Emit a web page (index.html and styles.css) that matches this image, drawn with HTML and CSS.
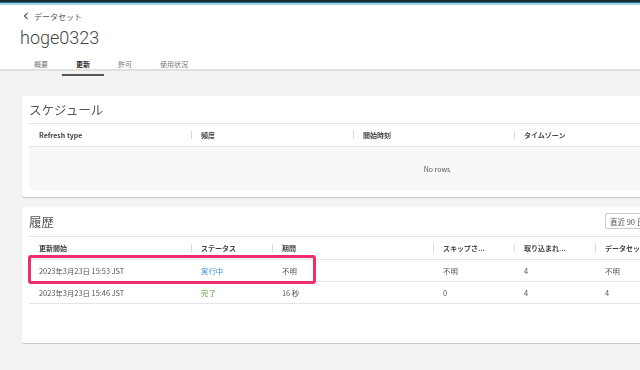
FILE: index.html
```html
<!DOCTYPE html>
<html lang="ja">
<head>
    <meta charset="UTF-8">
    <meta name="viewport" content="width=device-width, initial-scale=1.0">
    <title>hoge0323</title>
    <link rel="stylesheet" href="styles.css">
</head>
<body>
    <div class="topbar"></div>

    <header class="page-header">
        <div class="breadcrumb">
            <svg class="chevron" width="6" height="8" viewBox="0 0 6 8"><path d="M4.5 0.8 L1.5 4 L4.5 7.2" fill="none" stroke="#555" stroke-width="1.2"/></svg>
            <span>データセット</span>
        </div>
        <h1>hoge0323</h1>
        <nav class="tabs">
            <span class="tab">概要</span>
            <span class="tab active">更新</span>
            <span class="tab">許可</span>
            <span class="tab">使用状況</span>
        </nav>
    </header>

    <main class="content">
        <!-- スケジュール -->
        <section class="card">
            <div class="card-title">
                <h2>スケジュール</h2>
            </div>
            <div class="table">
                <div class="thead sched-cols">
                    <div class="th">Refresh type</div>
                    <div class="th sep">頻度</div>
                    <div class="th sep">開始時刻</div>
                    <div class="th sep">タイムゾーン</div>
                    <div class="th"></div>
                </div>
                <div class="empty">No rows</div>
            </div>
        </section>

        <!-- 履歴 -->
        <section class="card history">
            <div class="card-title">
                <h2>履歴</h2>
                <div class="range-select">直近 90 日</div>
            </div>
            <div class="table">
                <div class="thead hist-cols">
                    <div class="th">更新開始</div>
                    <div class="th sep">ステータス</div>
                    <div class="th sep">期間</div>
                    <div class="th sep">スキップさ...</div>
                    <div class="th sep">取り込まれ...</div>
                    <div class="th sep">データセット</div>
                </div>
                <div class="row hist-cols">
                    <div class="td">2023年3月23日 15:53 JST</div>
                    <div class="td running">実行中</div>
                    <div class="td">不明</div>
                    <div class="td">不明</div>
                    <div class="td">4</div>
                    <div class="td">不明</div>
                </div>
                <div class="row hist-cols">
                    <div class="td">2023年3月23日 15:46 JST</div>
                    <div class="td done">完了</div>
                    <div class="td">16 秒</div>
                    <div class="td">0</div>
                    <div class="td">4</div>
                    <div class="td">4</div>
                </div>
                <div class="highlight"></div>
            </div>
        </section>
    </main>
</body>
</html>
```

FILE: styles.css
```css
:root {
    --text: #444;
    --muted: #666;
    --line: #e4e4e4;
    --page: #f3f3f3;
}

body {
    margin: 0;
    width: 640px;
    height: 370px;
    overflow: hidden;
    background-color: var(--page);
    font-family: "Noto Sans CJK JP", "Noto Sans", sans-serif;
    color: var(--text);
}

.topbar {
    height: 2px;
    background-color: #1b2a33;
    border-bottom: 1px solid #1f6b8c;
    box-shadow: 0 2px 0 #a7d3ea;
    margin-bottom: 2px;
}

.page-header {
    background-color: #fff;
    height: 66px;
    border-bottom: 2px solid #e0e0e0;
    box-sizing: border-box;
    padding: 5px 0 0 20px;
}

.breadcrumb {
    display: flex;
    align-items: center;
    gap: 5px;
    font-size: 8px;
    color: #555;
    height: 12px;
    padding-left: 3px;
}

.page-header h1 {
    margin: 4px 0 0;
    font-family: Roboto, "Noto Sans", sans-serif;
    font-weight: 300;
    font-size: 18px;
    line-height: 24px;
    color: #444;
}

.tabs {
    display: flex;
    margin-top: 7px;
}

.tab {
    font-size: 7px;
    color: #777;
    padding: 0 14px;
    height: 19px;
    line-height: 14px;
    box-sizing: border-box;
}

.tab.active {
    color: #333;
    font-weight: bold;
    border-bottom: 2px solid #555;
}

.content {
    padding: 25px 0 0 22px;
}

.card {
    width: 830px;
    background-color: #fff;
    border-radius: 2px;
    box-shadow: 0 1px 1px rgba(0, 0, 0, 0.18);
    padding: 0 7px 7px;
    box-sizing: border-box;
    margin-bottom: 10px;
    will-change: transform;
}

.card.history {
    padding-bottom: 39px;
}

.card-title {
    height: 27px;
    border-bottom: 1px solid var(--line);
    display: flex;
    align-items: center;
    justify-content: space-between;
}

.card-title h2 {
    margin: 0;
    font-size: 12.5px;
    font-weight: normal;
    color: #555;
}

.history .card-title {
    height: 29px;
}

.range-select {
    margin-right: 168px;
    width: 72px;
    height: 16px;
    border: 1px solid #ccc;
    border-radius: 2px;
    font-size: 7.5px;
    line-height: 15px;
    padding-left: 4px;
    color: #555;
    box-sizing: border-box;
    margin-top: -1px;
}

.table {
    position: relative;
}

.thead, .row {
    display: grid;
    height: 22px;
    align-items: center;
    border-bottom: 1px solid var(--line);
}

.sched-cols {
    grid-template-columns: 162px 162px 161px 162px 1fr;
}

.hist-cols {
    grid-template-columns: 162px 81px 161px 81px 81px 1fr;
}

.th {
    font-size: 7px;
    font-weight: bold;
    color: #444;
    padding-left: 10px;
    position: relative;
    white-space: nowrap;
}

.th.sep::before {
    content: "";
    position: absolute;
    left: 0;
    top: 50%;
    margin-top: -4px;
    height: 8px;
    border-left: 1px solid #d8d8d8;
}

.empty {
    background-color: #f7f8fa;
    height: 43px;
    display: flex;
    align-items: center;
    justify-content: center;
    font-size: 7px;
    color: #555;
}

.row {
    height: 21px;
}

.td {
    font-size: 7.4px;
    color: #555;
    padding-left: 10px;
    white-space: nowrap;
}

.td.running {
    color: #3d8fe0;
}

.td.done {
    color: #5d9e3c;
}

.highlight {
    position: absolute;
    left: -1px;
    top: 18px;
    width: 288px;
    height: 29px;
    border: 3px solid #ef2d6c;
    border-radius: 3px;
    box-sizing: border-box;
}
```
